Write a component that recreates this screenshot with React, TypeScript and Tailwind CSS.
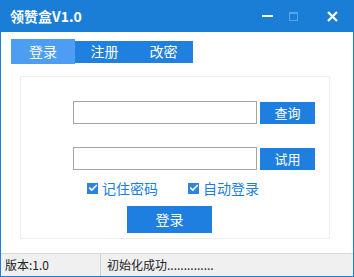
import { Check } from 'lucide-react';

const font = { fontFamily: '"Microsoft YaHei", "Noto Sans CJK SC", "Noto Sans", sans-serif' };

function CheckItem({ label }: { label: string }) {
  return (
    <label className="flex items-center gap-[4px] text-[14px] leading-none text-[#1a7ee0]">
      <span className="flex h-[11px] w-[11px] items-center justify-center bg-[#2b84e0]">
        <Check className="h-[10px] w-[10px] text-white" strokeWidth={4} />
      </span>
      {label}
    </label>
  );
}

export default function App() {
  return (
    <div
      style={font}
      className="flex h-[277px] w-[354px] flex-col overflow-hidden border-x border-b border-[#1a7ed6] bg-white"
    >
      {/* title bar */}
      <div className="-mx-px flex h-[32px] shrink-0 items-center bg-[#1a7ed6] pl-[10px] text-white">
        <span className="text-[14px] font-bold">领赞盒V1.0</span>
        <div className="ml-auto flex items-center">
          <span className="mr-[16px] h-[2px] w-[11px] bg-white" />
          <span className="mr-[29px] h-[9px] w-[9px] border border-t-2 border-[#5aa3e6]" />
          <svg width="11" height="11" viewBox="0 0 11 11" className="mr-[16px]">
            <path d="M1 1L10 10M10 1L1 10" stroke="white" strokeWidth="2.2" />
          </svg>
        </div>
      </div>

      <div className="flex flex-1 flex-col pl-[10px] pt-[7px]">
        {/* tabs */}
        <div className="flex items-center">
          <div className="flex h-[25px] w-[64px] items-center justify-center bg-[#4d9ef2] text-[14px] text-white">
            登录
          </div>
          <div className="flex h-[22px] w-[59px] items-center justify-center bg-[#1f80e0] text-[14px] text-white">
            注册
          </div>
          <div className="flex h-[22px] w-[59px] items-center justify-center bg-[#1f80e0] text-[14px] text-white">
            改密
          </div>
        </div>

        {/* panel */}
        <div className="ml-[9px] mt-[12px] flex h-[163px] w-[310px] flex-col border border-[#eeeeee] pl-[52px] pt-[24px]">
          <div className="flex items-center">
            <div className="h-[23px] w-[184px] border border-[#a5a5a5]" />
            <button className="ml-[3px] h-[22px] w-[55px] bg-[#1f7fe1] text-[13px] text-white">查询</button>
          </div>
          <div className="mt-[23px] flex items-center">
            <div className="h-[23px] w-[184px] border border-[#a5a5a5]" />
            <button className="ml-[3px] h-[22px] w-[55px] bg-[#1f7fe1] text-[13px] text-white">试用</button>
          </div>
          <div className="ml-[14px] mt-[11px] flex items-center gap-[30px]">
            <CheckItem label="记住密码" />
            <CheckItem label="自动登录" />
          </div>
          <button className="ml-[54px] mt-[11px] h-[27px] w-[85px] bg-[#1f7fe1] text-[14px] text-white">登录</button>
        </div>

        {/* status bar */}
        <div className="-ml-[10px] mt-auto flex h-[23px] items-center border-t border-[#d8d8d8] bg-[#f0f0f0] text-[12px] text-[#222]">
          <span className="w-[99px] pl-[4px]">版本:1.0</span>
          <span className="h-full border-l border-[#d0d0d0]" />
          <span className="pl-[6px]">初始化成功..............</span>
        </div>
      </div>
    </div>
  );
}
